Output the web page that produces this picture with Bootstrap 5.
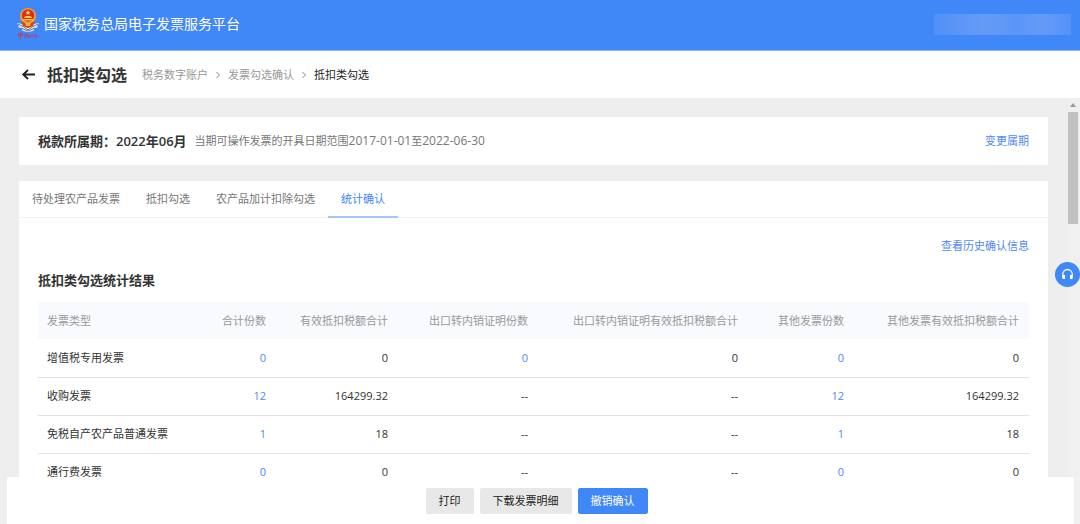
<!DOCTYPE html>
<html lang="zh-CN">
<head>
<meta charset="utf-8">
<meta name="viewport" content="width=device-width, initial-scale=1">
<title>抵扣类勾选</title>
<link href="https://cdn.jsdelivr.net/npm/bootstrap@5.3.0/dist/css/bootstrap.min.css" rel="stylesheet">
<style>
  :root { --brand: #4087f7; --link: #5089f5; --ink: #333; }
  body { font-family: "Open Sans", "Noto Sans CJK SC", sans-serif; font-size: 11px; line-height: 16px; color: var(--ink); background: #eee; }
  a { color: var(--link); text-decoration: none; }
  .topbar { height: 51px; padding: 0 9px 2px 16px; background: var(--brand); border-bottom: 1px solid #8fb8fb; }
  .site-name { font-size: 14px; line-height: 20px; color: #fff; }
  .user-blur { width: 137px; height: 21px; background: linear-gradient(90deg, #5090f7, #659bf6 35%, #5b96f7 60%, #659bf6 80%, #5391f7); }
  .titlebar { height: 47px; padding: 0 19px; background: #fff; }
  .back-btn { padding: 0; border: 0; background: none; color: #222; }
  .page-title { margin: 0 15px 0 10px; font-size: 16px; line-height: 24px; font-weight: 700; }
  .breadcrumb { --bs-breadcrumb-item-padding-x: 0; --bs-breadcrumb-item-active-color: #222; font-size: 11px; }
  .breadcrumb a { color: #999; }
  .breadcrumb svg { margin: 0 6px; }
  .breadcrumb-item + .breadcrumb-item::before { display: none; }
  .viewport { padding: 19px 32px 0 19px; min-height: 0; }
  .panel { background: #fff; }
  .period { min-height: 48px; padding: 0 19px; }
  .strong-text { font-size: 13px; line-height: 20px; font-weight: 600; }
  .muted-text { color: #777; }
  .date { font-size: 12px; }
  .nav-tabs { --bs-nav-tabs-border-color: #f1f1f1; --bs-nav-link-padding-x: 13px; }
  .nav-tabs .nav-link { height: 37px; padding-top: 10px; padding-bottom: 0; border: 0; border-bottom: 2px solid transparent; color: #777; font-size: 11px; margin-bottom: -1px; }
  .nav-tabs .nav-link.active { color: var(--brand); border-bottom-color: #a5c5fb; background: none; }
  .results { padding: 20px 19px 0; }
  .table { --bs-table-color: #333; --bs-table-bg: transparent; table-layout: fixed; }
  .table > :not(caption) > * > * { height: 38px; padding: 0 10px; vertical-align: middle; border-bottom: 1px solid #e2e3e5; text-align: right; white-space: nowrap; }
  .table > :not(caption) > * > *:first-child { padding-left: 9px; text-align: left; }
  .table > thead > tr > th { height: 37px; background: #f8fafd; color: #999; font-weight: 400; border-bottom: 0; }
  .c-count { width: 87px; } .c-tax { width: 122px; } .c-export { width: 140px; }
  .c-exporttax { width: 210px; } .c-other { width: 106px; } .c-othertax { width: 175px; }
  .scroll-track { width: 12px; top: 0; right: 0; bottom: 0; background: #f0f0f0; }
  .scroll-track .arrow-up { display: block; margin: 5px auto; margin-left: 2px; }
  .scroll-thumb { width: 10px; height: 112px; background: #c1c1c1; }
  .help-btn { width: 25px; height: 25px; right: 0; top: 50%; padding: 0; border: 0; border-radius: 50%; background: var(--brand); z-index: 1040; }
  .actions { left: 7px; right: 6px; bottom: 0; height: 47px; padding-right: 8px; background: #fff; z-index: 1030; }
  .actions .btn-row { gap: 6px; }
  .actions .btn { --bs-btn-font-size: 11px; --bs-btn-line-height: 16px; --bs-btn-padding-y: 4px; --bs-btn-padding-x: 12px; --bs-btn-border-radius: 2px; }
  .btn-plain { --bs-btn-bg: #e8e8e8; --bs-btn-border-color: #e8e8e8; --bs-btn-color: #222; --bs-btn-hover-bg: #ddd; }
  .actions .btn-primary { --bs-btn-bg: #4087f7; --bs-btn-border-color: #4087f7; }
</style>
</head>
<body class="vh-100 overflow-hidden d-flex flex-column">
<header class="topbar d-flex align-items-center justify-content-between flex-shrink-0">
  <div class="d-flex align-items-center gap-1">
    <svg width="24" height="34" viewBox="0 0 24 34" aria-hidden="true">
      <path d="M1 16l5 1 6 4 6-4 5-1-2 3 1 1-3 1-2 3-5 1-5-1-2-3-3-1 1-1z" fill="#e9edf2"/>
      <path d="M2 17l6 3 4 3 4-3 6-3M5 21l7 3 7-3" fill="none" stroke="#64758e" stroke-width="1"/>
      <circle cx="12" cy="9" r="8" fill="#eda32d"/>
      <circle cx="12" cy="8.500" r="6.200" fill="#dd2a1e"/>
      <path d="M12 3l.8 1.700 1.900.2-1.400 1.200.4 1.800-1.700-.9-1.700.9.4-1.800-1.400-1.200 1.900-.2zM8 11h8v-1l-2-1h-4l-2 1zM7 12h10v1.500H7z" fill="#f7c744"/>
      <path d="M5 14l4 2h6l4-2-2 5-5 2-5-2z" fill="#d93a23"/>
      <path d="M9 16h6l-1 3h-4z" fill="#f0b02f"/>
      <g fill="none" stroke="#b8405a" stroke-width=".9" stroke-linecap="round"><path d="M2.500 27l4-.5-.5 2-3 .5zM4.800 25.500l-.3 6.500M8.500 27.500l3-.5-.5 3M8.500 31l1.500-3M13 28l-.5 2.500 2-1M15.500 28l1-.5-.5 2.500M18.500 28l2-.5-1 1.500-1.500 1M20 30l2-.5"/></g>
    </svg>
    <span class="site-name">国家税务总局电子发票服务平台</span>
  </div>
  <div class="user-blur" aria-hidden="true"></div>
</header>

<div class="titlebar d-flex align-items-center flex-shrink-0">
  <button class="back-btn d-flex" type="button" aria-label="返回">
    <svg width="18" height="18" viewBox="0 0 18 18" fill="none" stroke="currentColor" stroke-width="1.800"><path d="M16 8.500H4.500M9 4L4.200 8.500 9 13"/></svg>
  </button>
  <h1 class="page-title">抵扣类勾选</h1>
  <nav aria-label="breadcrumb">
    <ol class="breadcrumb mb-0">
      <li class="breadcrumb-item d-flex align-items-center"><a href="#">税务数字账户</a><svg width="8" height="8" viewBox="0 0 8 8" fill="none" stroke="#888"><path d="M2.500 1l3 3-3 3"/></svg></li>
      <li class="breadcrumb-item d-flex align-items-center"><a href="#">发票勾选确认</a><svg width="8" height="8" viewBox="0 0 8 8" fill="none" stroke="#888"><path d="M2.500 1l3 3-3 3"/></svg></li>
      <li class="breadcrumb-item active" aria-current="page">抵扣类勾选</li>
    </ol>
  </nav>
</div>

<main class="viewport position-relative flex-grow-1 overflow-hidden">
  <section class="panel period d-flex align-items-center mb-3">
    <span class="strong-text">税款所属期：2022年06月</span>
    <span class="muted-text ms-2">当期可操作发票的开具日期范围<span class="date">2017-01-01</span>至<span class="date">2022-06-30</span></span>
    <a href="#" class="ms-auto">变更属期</a>
  </section>

  <section class="panel">
    <ul class="nav nav-tabs">
      <li class="nav-item"><a class="nav-link" href="#">待处理农产品发票</a></li>
      <li class="nav-item"><a class="nav-link" href="#">抵扣勾选</a></li>
      <li class="nav-item"><a class="nav-link" href="#">农产品加计扣除勾选</a></li>
      <li class="nav-item"><a class="nav-link active" aria-current="page" href="#">统计确认</a></li>
    </ul>
    <div class="results">
      <div class="text-end"><a href="#">查看历史确认信息</a></div>
      <h2 class="strong-text mt-3 mb-2 pb-1">抵扣类勾选统计结果</h2>
      <table class="table mb-0">
        <colgroup><col><col class="c-count"><col class="c-tax"><col class="c-export"><col class="c-exporttax"><col class="c-other"><col class="c-othertax"></colgroup>
        <thead>
          <tr><th>发票类型</th><th>合计份数</th><th>有效抵扣税额合计</th><th>出口转内销证明份数</th><th>出口转内销证明有效抵扣税额合计</th><th>其他发票份数</th><th>其他发票有效抵扣税额合计</th></tr>
        </thead>
        <tbody>
          <tr><td>增值税专用发票</td><td><a href="#">0</a></td><td>0</td><td><a href="#">0</a></td><td>0</td><td><a href="#">0</a></td><td>0</td></tr>
          <tr><td>收购发票</td><td><a href="#">12</a></td><td>164299.32</td><td>--</td><td>--</td><td><a href="#">12</a></td><td>164299.32</td></tr>
          <tr><td>免税自产农产品普通发票</td><td><a href="#">1</a></td><td>18</td><td>--</td><td>--</td><td><a href="#">1</a></td><td>18</td></tr>
          <tr><td>通行费发票</td><td><a href="#">0</a></td><td>0</td><td>--</td><td>--</td><td><a href="#">0</a></td><td>0</td></tr>
        </tbody>
      </table>
    </div>
  </section>

  <div class="scroll-track position-absolute" aria-hidden="true">
    <svg class="arrow-up" width="6" height="4" viewBox="0 0 6 4"><path d="M0 4l3-4 3 4z" fill="#999"/></svg>
    <div class="scroll-thumb"></div>
  </div>
</main>

<button class="help-btn position-fixed d-flex align-items-center justify-content-center" type="button" aria-label="客服">
  <svg width="13" height="13" viewBox="0 0 13 13" fill="none" stroke="#fff"><path d="M1.800 8V6.200a4.700 4.700 0 0 1 9.400 0V8" stroke-width="1.300"/><path d="M1.200 7h2.800v4H2.500a1.300 1.300 0 0 1-1.300-1.300zM11.800 7H9v4h1.500a1.300 1.300 0 0 0 1.300-1.300z" fill="#fff" stroke="none"/></svg>
</button>

<footer class="actions position-fixed d-flex align-items-center justify-content-center">
  <div class="btn-row d-flex">
    <button type="button" class="btn btn-plain">打印</button>
    <button type="button" class="btn btn-plain">下载发票明细</button>
    <button type="button" class="btn btn-primary">撤销确认</button>
  </div>
</footer>
<script src="https://cdn.jsdelivr.net/npm/bootstrap@5.3.0/dist/js/bootstrap.bundle.min.js"></script>
</body>
</html>
